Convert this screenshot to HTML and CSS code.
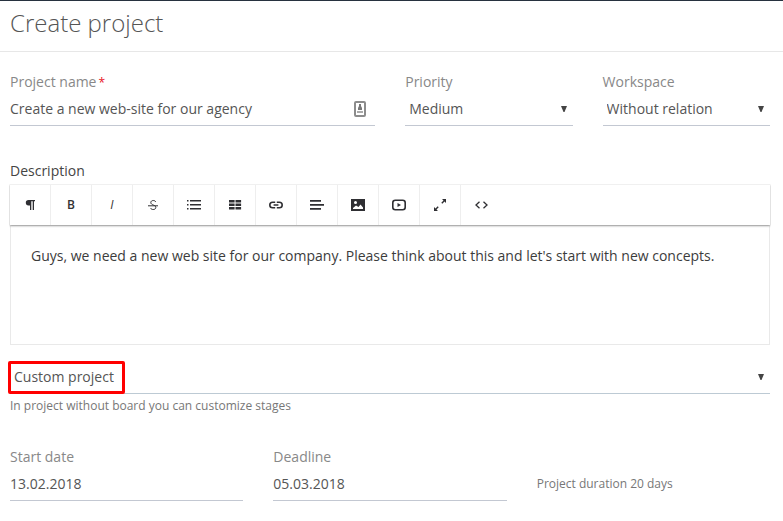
FILE: index.html
```html
<!DOCTYPE html>
<html lang="en">
<head>
<meta charset="utf-8">
<title>Create project</title>
<link rel="stylesheet" href="styles.css">
</head>
<body>
<header class="page-header"><h1>Create project</h1></header>
<form class="project-form">
  <div class="row row-main">
    <div class="field">
      <label for="name">Project name<span class="required">*</span></label>
      <div class="control">
        <input id="name" type="text" value="Create a new web-site for our agency">
        <svg class="card-icon" viewBox="0 0 12 16" aria-hidden="true"><rect x="1" y="1" width="10" height="14" rx="1" fill="#fff" stroke="#8c8c8c" stroke-width="2"/><path d="M5 3h2v2l1 2v2H4V7l1-2z" fill="#777"/><path d="M3 10h6v2H3z" fill="#aaa"/></svg>
      </div>
    </div>
    <div class="field">
      <label for="priority">Priority</label>
      <div class="control">
        <select id="priority"><option>Medium</option></select>
        <svg class="arrow" viewBox="0 0 6 6" aria-hidden="true"><path d="M0 0h6L3.500 6h-1z"/></svg>
      </div>
    </div>
    <div class="field">
      <label for="workspace">Workspace</label>
      <div class="control">
        <select id="workspace"><option>Without relation</option></select>
        <svg class="arrow" viewBox="0 0 6 6" aria-hidden="true"><path d="M0 0h6L3.500 6h-1z"/></svg>
      </div>
    </div>
  </div>

  <div class="description">
    <label for="description">Description</label>
    <div class="toolbar">
      <button type="button" aria-label="Paragraph"><svg viewBox="0 0 14 14"><path d="M5.500 2H12v1.200h-1V12H9.700V3.200H8.300V12H7V7.500H5.500C3.700 7.500 2.800 6.300 2.800 4.700S3.700 2 5.500 2z"/></svg></button>
      <button type="button" class="bold" aria-label="Bold">B</button>
      <button type="button" class="italic" aria-label="Italic">I</button>
      <button type="button" aria-label="Strikethrough"><svg viewBox="0 0 14 14"><path class="thin" d="M9.800 3.800C9.300 2.900 8.400 2.500 7.300 2.500 5.900 2.500 4.800 3.300 4.800 4.500c0 1.400 1.300 1.900 2.500 2.500 1.500.6 2.500 1.200 2.500 2.500 0 1.300-1.100 2-2.600 2-1.200 0-2.200-.5-2.700-1.500M2 7.800h10"/></svg></button>
      <button type="button" aria-label="List"><svg viewBox="0 0 14 14"><path d="M0 2h1.500v1.600H0zM0 6h1.500v1.600H0zM0 10h1.500v1.600H0zM3 2h11v1.600H3zM3 6h11v1.600H3zM3 10h11v1.600H3z"/></svg></button>
      <button type="button" aria-label="Table"><svg viewBox="0 0 14 14"><path d="M1 2h5.600v2.600H1zM7.500 2h5.600v2.600H7.500zM1 5.500h5.600v2.600H1zM7.500 5.500h5.600v2.600H7.500zM1 9h5.600v2.600H1zM7.500 9h5.600v2.600H7.500z"/></svg></button>
      <button type="button" aria-label="Link"><svg viewBox="0 0 14 14"><path class="line" d="M6.200 4.200H3.600a2.800 2.800 0 0 0 0 5.600H6.200M7.800 4.200h2.600a2.800 2.800 0 0 1 0 5.600H7.800M4.600 7h4.800"/></svg></button>
      <button type="button" aria-label="Align"><svg viewBox="0 0 14 14"><path d="M0 2h11v1.700H0zM0 6h14v1.700H0zM0 10h11v1.700H0z"/></svg></button>
      <button type="button" aria-label="Image"><svg viewBox="0 0 14 14"><path fill-rule="evenodd" d="M0 1h14v12H0zM2 11h10V9.500L9.500 6.500 7.500 9 5 7.500 2 10zM4.500 3a1.500 1.500 0 1 0 0 3 1.500 1.500 0 0 0 0-3z"/></svg></button>
      <button type="button" aria-label="Video"><svg viewBox="0 0 14 14"><rect class="line" x=".8" y="2.300" width="12.400" height="9.400" rx="2.500"/><path d="M5.500 5v4L9 7z"/></svg></button>
      <button type="button" aria-label="Fullscreen"><svg viewBox="0 0 14 14"><path d="M9 1h4v4l-1.500-1.500L9.300 5.700l-1-1L10.500 2.500zM1 9l1.500 1.500L4.700 8.300l1 1L3.500 11.500 5 13H1z"/></svg></button>
      <button type="button" aria-label="Source"><svg viewBox="0 0 14 14"><path class="line code" d="M4.500 3.800L1 7l3.500 3.200M8.500 3.800L12 7l-3.500 3.200"/></svg></button>
    </div>
    <textarea id="description">Guys, we need a new web site for our company. Please think about this and let's start with new concepts.</textarea>
  </div>

  <div class="project-type">
    <div class="control highlighted">
      <select aria-label="Project type"><option>Custom project</option></select>
      <svg class="arrow" viewBox="0 0 6 6" aria-hidden="true"><path d="M0 0h6L3.500 6h-1z"/></svg>
    </div>
    <p class="hint">In project without board you can customize stages</p>
  </div>

  <div class="row row-dates">
    <div class="field">
      <label for="start">Start date</label>
      <div class="control"><input id="start" type="text" value="13.02.2018"></div>
    </div>
    <div class="field">
      <label for="deadline">Deadline</label>
      <div class="control"><input id="deadline" type="text" value="05.03.2018"></div>
    </div>
    <p class="duration">Project duration 20 days</p>
  </div>
</form>
</body>
</html>
```
FILE: styles.css
```css
*, *::after { box-sizing: border-box; }
body {
  margin: 0;
  border-top: 1px solid #27323f;
  background: #fff;
  color: #555;
  font: 14px/20px "Open Sans", sans-serif;
}
.page-header {
  padding: 6px 10px 12px;
  border-bottom: 1px solid #e7e7e7;
}
h1 {
  margin: 0;
  font-size: 24px;
  font-weight: 300;
  line-height: 32px;
}
.project-form { padding: 20px 13px 20px 10px; }
.row { display: grid; gap: 30px; }
.row-main { grid-template-columns: 24fr 11fr 11fr; }
.row-dates { grid-template-columns: repeat(3, 1fr); margin-top: 31px; }
label { display: block; color: #888; }
.required {
  margin-left: 2px;
  color: #e8121d;
  font-size: 12px;
  line-height: 12px;
}
.control { position: relative; }
input, select {
  display: block;
  width: 100%;
  height: 34px;
  margin: 0;
  padding: 0;
  border: 0;
  border-bottom: 1px solid #c3c8d2;
  border-radius: 0;
  background: transparent;
  color: #555;
  font: inherit;
  outline: 0;
}
select { padding: 0 4px; appearance: none; }
.arrow {
  position: absolute;
  top: 14px;
  right: 6px;
  width: 6px;
  height: 6px;
  fill: #444;
  pointer-events: none;
}
.card-icon {
  position: absolute;
  top: 9px;
  right: 9px;
  width: 12px;
  height: 16px;
}
.description { margin-top: 35px; }
.description label { margin-bottom: 3px; color: #444; }
.toolbar {
  position: relative;
  display: flex;
  border-top: 1px solid #f0f0f0;
  box-shadow: 0 1px 2px rgba(0, 0, 0, .36);
  clip-path: inset(0 -1px -4px -1px);
}
.toolbar button {
  display: flex;
  align-items: center;
  justify-content: center;
  width: 41px;
  height: 40px;
  padding: 0;
  border: 0;
  border-right: 1px solid #eee;
  background: transparent;
  color: #333;
  font: 12px/16px "Open Sans", sans-serif;
}
.toolbar button:last-child { border-right: 0; }
.toolbar .bold { font-weight: 600; }
.toolbar .italic { font-style: italic; }
.toolbar svg { width: 14px; height: 14px; fill: #2f2f33; }
.toolbar .line, .toolbar .thin { fill: none; stroke: #2f2f33; stroke-width: 1.6; }
.toolbar .thin { stroke-width: 1; }
.toolbar .code { stroke-width: 1.3; }
textarea {
  display: block;
  width: 100%;
  height: 120px;
  padding: 20px;
  border: 1px solid #e9e9e9;
  background: transparent;
  color: #3c3c3c;
  font: inherit;
  resize: none;
  outline: 0;
}
.project-type { margin-top: 15px; }
.project-type select { border-color: #bdcad4; }
.highlighted::after {
  content: "";
  position: absolute;
  top: 1px;
  left: -2px;
  width: 117px;
  height: 33px;
  border: 3px solid #f00;
  border-radius: 2px;
  pointer-events: none;
}
.hint, .duration { margin: 0; color: #777; font-size: 12px; }
.hint { margin-top: 2px; }
.duration { align-self: end; padding-bottom: 7px; }
```
